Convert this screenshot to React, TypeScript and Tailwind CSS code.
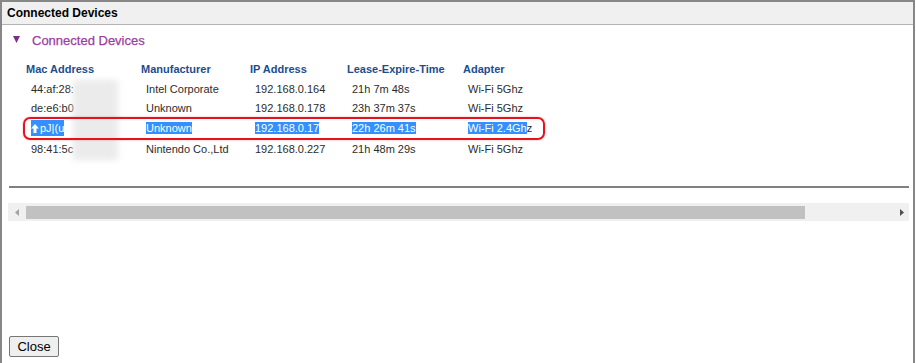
import React from "react";

const rows = [
  { mac: "44:af:28:", man: "Intel Corporate", ip: "192.168.0.164", lease: "21h 7m 48s", ad: "Wi-Fi 5Ghz", h: "h-[19px]" },
  { mac: "de:e6:b0", man: "Unknown", ip: "192.168.0.178", lease: "23h 37m 37s", ad: "Wi-Fi 5Ghz", h: "h-[19px]" },
];

function Cell({ children, w }: { children: React.ReactNode; w: string }) {
  return <div className={`${w} shrink-0 pl-[5px] whitespace-nowrap`}>{children}</div>;
}

export default function App() {
  const sel = "bg-[#3390ff] text-white";
  return (
    <div className="relative w-[916px] h-[363px] bg-white overflow-hidden" style={{ fontFamily: '"Liberation Sans", Arial, sans-serif' }}>
      <div className="w-[915px] h-[363px] border-l-2 border-t-2 border-r-2 border-[#878787] flex flex-col">
        <div className="h-[23px] shrink-0 bg-[#f0f0f0] border-b border-[#b4b4b4] pl-[5px] flex items-center text-[12px] font-bold text-black">
          Connected Devices
        </div>
        <div className="flex items-center h-[18px] mt-[7px] pl-[11px] text-[#9b3d9f]">
          <span className="w-[19px] flex -mt-[3px]">
            <svg width="7" height="7" viewBox="0 0 7 7"><path d="M0 0 L7 0 L3.5 7 Z" fill="#7b2f86" /></svg>
          </span>
          <span className="text-[13px] [-webkit-text-stroke:0.25px_#9b3d9f]">Connected Devices</span>
        </div>
        <div className="mt-[11px] pl-[24px] text-[11px]">
          <div className="flex h-[17px] items-center font-bold text-[#1d4d8e]">
            <div className="w-[115px] shrink-0">Mac Address</div>
            <div className="w-[109px] shrink-0">Manufacturer</div>
            <div className="w-[97px] shrink-0">IP Address</div>
            <div className="w-[116px] shrink-0">Lease-Expire-Time</div>
            <div>Adapter</div>
          </div>
          <div className="text-[#2c2c2c]">
            {rows.map((r, i) => (
              <div key={i} className={`flex items-center ${r.h} ${i === 0 ? "mt-[2px]" : ""}`}>
                <Cell w="w-[115px]">{r.mac}</Cell>
                <Cell w="w-[109px]">{r.man}</Cell>
                <Cell w="w-[97px]">{r.ip}</Cell>
                <Cell w="w-[116px]">{r.lease}</Cell>
                <Cell w="w-[100px]">{r.ad}</Cell>
              </div>
            ))}
            <div className="flex items-center h-[21px]">
              <Cell w="w-[115px]">
                <span className={`${sel} inline-flex items-center`}>
                  <svg width="8" height="9" viewBox="0 0 8 9" className="mr-[1px]">
                    <path d="M4 0 L8 4.5 L5.5 4.5 L5.5 9 L2.5 9 L2.5 4.5 L0 4.5 Z" fill="#ffffff" />
                  </svg>
                  pJ|(u
                </span>
              </Cell>
              <Cell w="w-[109px]"><span className={sel}>Unknown</span></Cell>
              <Cell w="w-[97px]"><span className={sel}>192.168.0.17</span></Cell>
              <Cell w="w-[116px]"><span className={sel}>22h 26m 41s</span></Cell>
              <Cell w="w-[100px]"><span className={sel}>Wi-Fi 2.4Gh</span>z</Cell>
            </div>
            <div className="flex items-center h-[20px]">
              <Cell w="w-[115px]">98:41:5c</Cell>
              <Cell w="w-[109px]">Nintendo Co.,Ltd</Cell>
              <Cell w="w-[97px]">192.168.0.227</Cell>
              <Cell w="w-[116px]">21h 48m 29s</Cell>
              <Cell w="w-[100px]">Wi-Fi 5Ghz</Cell>
            </div>
          </div>
        </div>
        <div className="mt-[27px] ml-[7px] mr-[4px] h-[2px] bg-[#808080]" />
        <div className="mt-[15px] ml-[6px] mr-[4px] h-[18px] bg-[#f0f0f0] flex items-center">
          <div className="w-[18px] flex justify-center">
            <svg width="4" height="7" viewBox="0 0 4 7"><path d="M4 0 L0 3.5 L4 7 Z" fill="#a3a3a3" /></svg>
          </div>
          <div className="w-[779px] h-[13px] bg-[#c1c1c1]" />
          <div className="flex-1" />
          <div className="w-[14px] flex justify-center">
            <svg width="4" height="7" viewBox="0 0 4 7"><path d="M0 0 L4 3.5 L0 7 Z" fill="#505050" /></svg>
          </div>
        </div>
        <div className="flex-1" />
        <div className="pl-[7px] pb-[5px]">
          <button className="w-[50px] h-[21px] bg-[#efefef] border border-[#767676] rounded-[2px] text-[13px] text-black leading-none" style={{ fontFamily: '"Liberation Sans", Arial, sans-serif' }}>
            Close
          </button>
        </div>
      </div>
      <div className="absolute left-[73px] top-[80px] w-[45px] h-[80px] bg-[#e9e9e9]/90 blur-[3px]" />
      <div className="absolute left-[23px] top-[117px] w-[522px] h-[23px] border-2 border-[#e8121c] rounded-[7px] shadow-[0_0_2px_rgba(232,18,28,0.4)]" />
    </div>
  );
}
